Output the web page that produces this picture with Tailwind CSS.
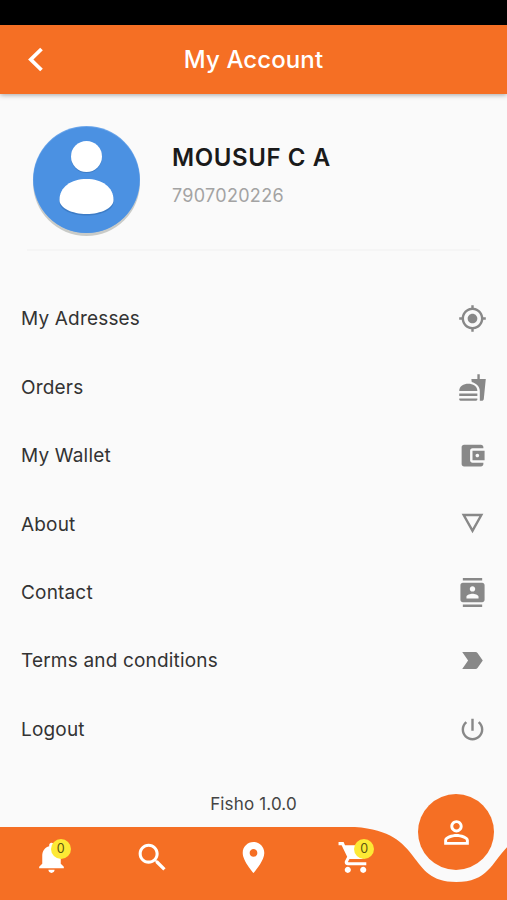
<!DOCTYPE html>
<html lang="en">
<head>
  <meta charset="UTF-8" />
  <title>My Account</title>
  <meta name="viewport" content="width=device-width, initial-scale=1.0" />
  <script src="https://cdn.jsdelivr.net/npm/@tailwindcss/browser@4"></script>
</head>
<body class="bg-[#fafafa] font-['Inter','Liberation_Sans',sans-serif]">
  <div class="w-[507px] h-[900px] flex flex-col overflow-hidden">

    <!-- Status bar -->
    <div class="h-[25px] bg-black shrink-0"></div>

    <!-- App bar -->
    <header class="h-[69px] shrink-0 bg-[#f56f24] shadow-[0_1px_5px_rgba(0,0,0,0.35)] grid grid-cols-[70px_1fr_70px] items-center">
      <button class="pl-[28px]" aria-label="Back">
        <svg class="w-4 h-[25px]" viewBox="0 0 16 25" fill="none" stroke="#fff" stroke-width="3.8">
          <path d="M13.500 2L2.800 12.500L13.500 23" />
        </svg>
      </button>
      <h1 class="text-center text-white text-[24px] font-medium tracking-[0.1px]">My Account</h1>
    </header>

    <!-- Profile -->
    <section class="h-[157px] shrink-0 mx-[27px] border-b-2 border-[#f5f5f5] flex">
      <svg class="w-[111px] h-[116px] mt-[30px] ml-[4px] shrink-0" viewBox="0 0 111 116">
        <circle cx="55.5" cy="58.5" r="53.5" fill="#c9cbc8" />
        <circle cx="55.5" cy="55.5" r="53.5" fill="#6aa5ea" />
        <circle cx="55.5" cy="56" r="53" fill="#4b91e2" />
        <g fill="#3d7cc6">
          <circle cx="55.5" cy="33.5" r="15.5" />
          <path d="M28.500 78C28.500 65 40 56 55.500 56S82.500 65 82.500 78C82.500 86 70 91.500 55.500 91.500S28.500 86 28.500 78Z" />
        </g>
        <g fill="#fff">
          <circle cx="55.5" cy="32.500" r="15.5" />
          <path d="M28.500 76C28.500 63 40 55 55.500 55S82.500 63 82.500 76C82.500 84 70 90 55.500 90S28.500 84 28.500 76Z" />
        </g>
      </svg>
      <div class="ml-[30px] pt-[48px]">
        <h2 class="text-[24px] leading-[32px] font-semibold text-[#1a1a1a] tracking-[0.6px]">MOUSUF C A</h2>
        <p class="mt-[9px] text-[18px] leading-[26px] text-[#a3a3a3] tracking-[0.3px]">7907020226</p>
      </div>
    </section>

    <!-- Menu -->
    <ul class="mt-[33.500px] pl-[21px] pr-5 shrink-0 text-[19px] tracking-[0.18px] text-[#333]">
      <li class="h-[68.400px] flex items-center justify-between">
        <span class="pt-[2px]">My Adresses</span>
        <svg class="size-[29px]" viewBox="0 0 24 24" fill="#888"><path d="M12 8c-2.210 0-4 1.790-4 4s1.790 4 4 4 4-1.790 4-4-1.790-4-4-4zm8.940 3c-.46-4.170-3.770-7.480-7.940-7.940V1h-2v2.060C6.830 3.520 3.520 6.830 3.060 11H1v2h2.060c.46 4.170 3.770 7.480 7.940 7.940V23h2v-2.060c4.170-.46 7.480-3.770 7.940-7.940H23v-2h-2.060zM12 19c-3.870 0-7-3.130-7-7s3.130-7 7-7 7 3.130 7 7-3.130 7-7 7z" /></svg>
      </li>
      <li class="h-[68.400px] flex items-center justify-between">
        <span class="pt-[2px]">Orders</span>
        <svg class="size-[29px]" viewBox="0 0 24 24" fill="#888"><path d="M18.060 22.990h1.660c.84 0 1.530-.64 1.630-1.460L23 5.050h-5V1h-1.970v4.050h-4.970l.3 2.340c1.710.47 3.310 1.320 4.270 2.260 1.440 1.420 2.430 2.890 2.430 5.290v8.050zM1 21.990V21h15.030v.99c0 .55-.45 1-1.010 1H2.010c-.56 0-1.010-.45-1.010-1zm15.030-7c0-8-15.030-8-15.030 0h15.030zM1.020 17h15v2h-15z" /></svg>
      </li>
      <li class="h-[68.400px] flex items-center justify-between">
        <span class="pt-[2px]">My Wallet</span>
        <svg class="size-[29px]" viewBox="0 0 24 24" fill="#888"><path d="M21 18v1c0 1.100-.9 2-2 2H5c-1.110 0-2-.9-2-2V5c0-1.100.89-2 2-2h14c1.100 0 2 .9 2 2v1h-9c-1.110 0-2 .9-2 2v8c0 1.100.89 2 2 2h9zm-9-2h10V8H12v8zm4-2.500c-.83 0-1.500-.67-1.500-1.500s.67-1.500 1.500-1.500 1.500.67 1.500 1.500-.67 1.500-1.500 1.500z" /></svg>
      </li>
      <li class="h-[68.400px] flex items-center justify-between">
        <span class="pt-[2px]">About</span>
        <svg class="size-[29px]" viewBox="0 0 24 24" fill="#888"><path d="M3 4l9 16 9-16H3zm3.380 2h11.250L12 16 6.380 6z" /></svg>
      </li>
      <li class="h-[68.400px] flex items-center justify-between">
        <span class="pt-[2px]">Contact</span>
        <svg class="size-[29px]" viewBox="0 0 24 24" fill="#888"><path d="M20 0H4v2h16V0zM4 24h16v-2H4v2zM20 4H4c-1.100 0-2 .9-2 2v12c0 1.100.9 2 2 2h16c1.100 0 2-.9 2-2V6c0-1.100-.9-2-2-2zm-8 2.750c1.240 0 2.250 1.010 2.250 2.250s-1.010 2.250-2.250 2.250S9.750 10.240 9.750 9 10.760 6.750 12 6.750zM17 17H7v-1.500c0-1.670 3.330-2.500 5-2.500s5 .83 5 2.500V17z" /></svg>
      </li>
      <li class="h-[68.400px] flex items-center justify-between">
        <span class="pt-[2px]">Terms and conditions</span>
        <svg class="size-[29px]" viewBox="0 0 24 24" fill="#888"><path d="M3.500 18.990l11 .01c.67 0 1.270-.33 1.630-.84L20.500 12l-4.370-6.160c-.36-.51-.96-.84-1.630-.84l-11 .01L8.340 12 3.500 18.990z" /></svg>
      </li>
      <li class="h-[68.400px] flex items-center justify-between">
        <span class="pt-[2px]">Logout</span>
        <svg class="size-[29px]" viewBox="0 0 24 24" fill="#888"><path d="M13 3h-2v10h2V3zm4.830 2.170l-1.420 1.420C17.990 7.860 19 9.810 19 12c0 3.870-3.130 7-7 7s-7-3.130-7-7c0-2.190 1.010-4.140 2.580-5.420L6.170 5.170C4.230 6.820 3 9.260 3 12c0 4.970 4.030 9 9 9s9-4.030 9-9c0-2.740-1.230-5.180-3.170-6.830z" /></svg>
      </li>
    </ul>

    <p class="mt-auto mb-[11px] text-center text-[17px] leading-[24px] tracking-[0.15px] text-[#444]">Fisho 1.0.0</p>

    <!-- Bottom navigation, notched under the active tab -->
    <nav class="relative h-[73px] shrink-0">
      <svg class="absolute inset-0 w-[507px] h-[73px]" viewBox="0 0 507 73" fill="#f56f24">
        <path d="M0 0H354.900C425.900 4.600 405.600 55 456.300 55C507 55 486.700 4.600 557.700 0V73H0Z" />
      </svg>
      <div class="relative grid grid-cols-5 justify-items-center pt-[12px] pl-px">
        <div class="relative size-[37px]">
          <svg class="size-[37px]" viewBox="0 0 24 24" fill="#fff"><path d="M12 22c1.100 0 2-.9 2-2h-4c0 1.100.89 2 2 2zm6-6v-5c0-3.070-1.640-5.640-4.500-6.320V4c0-.83-.67-1.500-1.500-1.500s-1.500.67-1.500 1.500v.68C7.630 5.360 6 7.920 6 11v5l-2 2v1h16v-1l-2-2z" /></svg>
          <span class="absolute top-0 left-[17.500px] size-5 rounded-full bg-[#fde935] text-[#5c5410] text-[12.500px] leading-5 text-center">0</span>
        </div>
        <svg class="size-[37px]" viewBox="0 0 24 24" fill="#fff"><path d="M15.500 14h-.79l-.28-.27C15.410 12.590 16 11.110 16 9.500 16 5.910 13.090 3 9.500 3S3 5.910 3 9.500 5.910 16 9.500 16c1.610 0 3.090-.59 4.230-1.570l.27.28v.79l5 4.990L20.490 19l-4.990-5zm-6 0C7.010 14 5 11.990 5 9.500S7.010 5 9.500 5 14 7.010 14 9.500 11.990 14 9.500 14z" /></svg>
        <svg class="size-[37px]" viewBox="0 0 24 24" fill="#fff"><path d="M12 2C8.130 2 5 5.130 5 9c0 5.250 7 13 7 13s7-7.750 7-13c0-3.870-3.130-7-7-7zm0 9.500c-1.380 0-2.500-1.120-2.500-2.500s1.120-2.500 2.500-2.500 2.500 1.120 2.500 2.500-1.120 2.500-2.500 2.500z" /></svg>
        <div class="relative size-[37px]">
          <svg class="size-[37px]" viewBox="0 0 24 24" fill="#fff"><path d="M7 18c-1.100 0-1.990.9-1.990 2S5.900 22 7 22s2-.9 2-2-.9-2-2-2zM1 2v2h2l3.600 7.590-1.350 2.450c-.16.28-.25.61-.25.96 0 1.100.9 2 2 2h12v-2H7.420c-.14 0-.25-.11-.25-.25l.03-.12.9-1.630h7.450c.75 0 1.410-.41 1.750-1.030l3.580-6.490c.08-.14.12-.31.12-.48 0-.55-.45-1-1-1H5.210l-.94-2H1zm16 16c-1.100 0-1.990.9-1.990 2s.89 2 1.990 2 2-.9 2-2-.9-2-2-2z" /></svg>
          <span class="absolute top-0 left-[17.500px] size-5 rounded-full bg-[#fde935] text-[#5c5410] text-[12.500px] leading-5 text-center">0</span>
        </div>
      </div>
      <button class="absolute left-[418px] -top-[33px] size-[76px] rounded-full bg-[#f56f24] flex items-center justify-center" aria-label="Account">
        <svg class="size-[37px]" viewBox="0 0 24 24" fill="#fff"><path d="M12 5.900c1.160 0 2.100.94 2.100 2.100s-.94 2.100-2.100 2.100S9.900 9.160 9.900 8s.94-2.100 2.100-2.100m0 9c2.970 0 6.100 1.460 6.100 2.100v1.100H5.900V17c0-.64 3.130-2.100 6.100-2.100M12 4C9.790 4 8 5.790 8 8s1.790 4 4 4 4-1.790 4-4-1.790-4-4-4zm0 9c-2.670 0-8 1.340-8 4v3h16v-3c0-2.660-5.330-4-8-4z" /></svg>
      </button>
    </nav>
  </div>
</body>
</html>
